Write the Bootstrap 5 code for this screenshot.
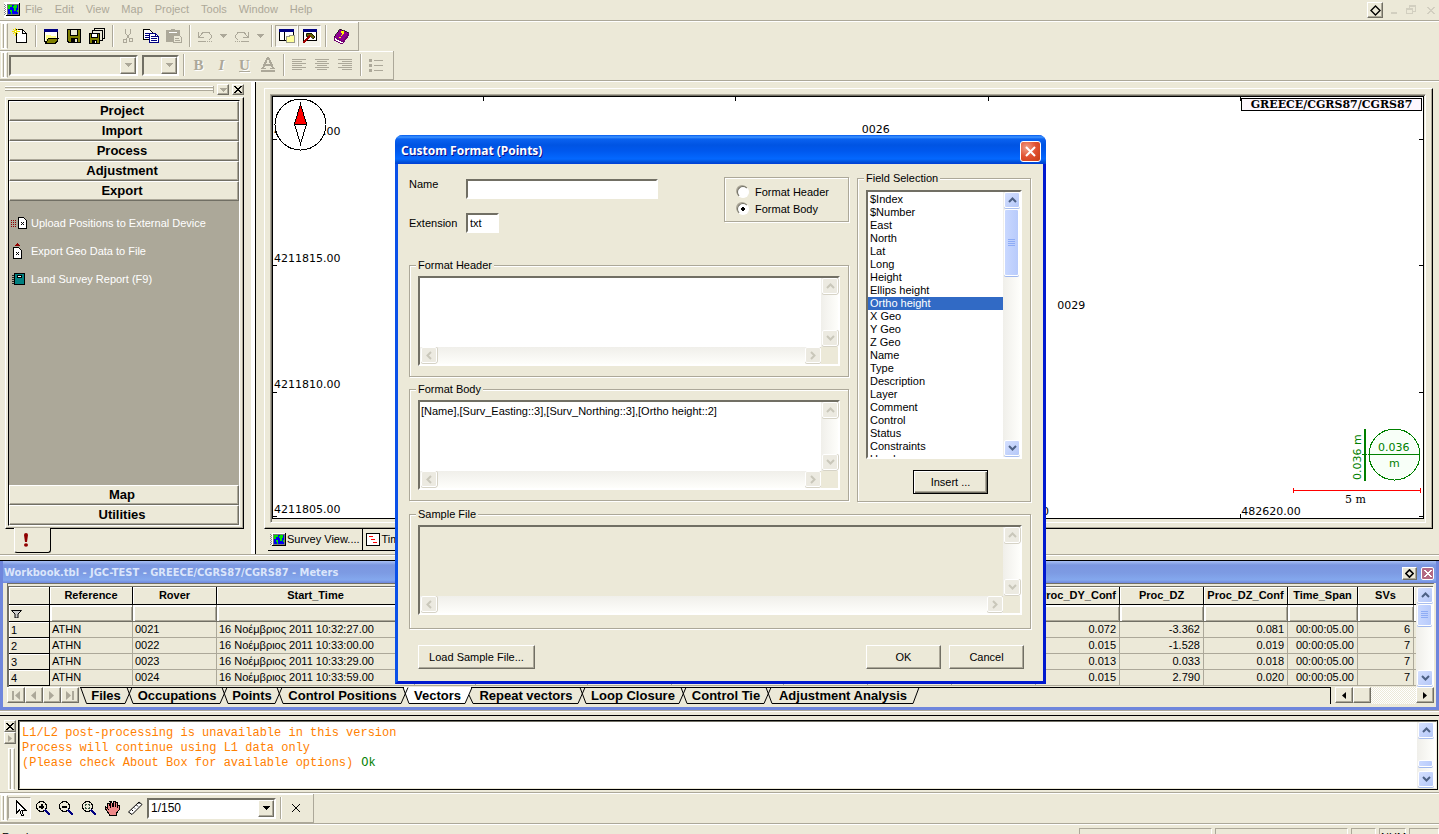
<!DOCTYPE html>
<html lang="en">
<head>
<meta charset="utf-8">
<meta name="viewport" content="width=device-width, initial-scale=1">
<title>Custom Format (Points)</title>
<link href="https://cdn.jsdelivr.net/npm/bootstrap@5.3.0/dist/css/bootstrap.min.css" rel="stylesheet">
<style>
:root{--face:#ece9d8;--shade:#aca899;--dark:#716f64;}
body{font:11px/13px "Liberation Sans",sans-serif;color:#000;background:var(--face);height:100vh;overflow:hidden}
button,input,select,textarea{font:inherit;color:inherit;border-radius:0}
button{padding:0;border:0;background:none}
svg{display:block;flex:none}
.ico{width:16px;height:16px;shape-rendering:crispEdges}
a{color:inherit;text-decoration:none}
.etch{border-bottom:1px solid var(--shade);box-shadow:0 1px #fff;margin-bottom:1px}
.raised{border:1px solid;border-color:#fff var(--dark) var(--dark) #fff;box-shadow:inset -1px -1px var(--shade);background:var(--face)}
.sunk{border:1px solid;border-color:var(--shade) #fff #fff var(--shade);box-shadow:inset 1px 1px var(--dark);padding:1px 1px 3px 1px}
/* menu */
.menubar{height:21px;padding:0 0 0 4px;color:var(--shade)}
.menubar .menus{gap:12px;padding-left:5px;padding-bottom:2px}
.sysbtn{width:16px;height:16px;color:#d2cfc0}
/* toolbars */
.tbar{height:29px;width:max-content;border-right:1px solid var(--shade);border-bottom:1px solid var(--shade);box-shadow:inset 0 1px #fff;padding:2px 6px 2px 1px}
.grip{width:7px;height:26px;border:1px solid;border-color:#fff var(--shade) #fff #fff;position:relative;background:linear-gradient(90deg,transparent 1px,var(--shade) 1px 2px,#fff 2px 4px,transparent 4px)}
.tb{width:23px;height:22px;display:flex;align-items:center;justify-content:center;color:var(--shade)}
.tb.on{border:1px solid;border-color:var(--shade) #fff #fff var(--shade);background:#f6f4ec}
.tsep{width:8px;height:22px;background:linear-gradient(90deg,transparent 4px,var(--shade) 4px 5px,#fff 5px 6px,transparent 6px)}
.tdrop{width:14px;height:22px;display:flex;align-items:center;justify-content:center;color:var(--shade)}
.glyph{font:bold 15px/18px "Liberation Serif",serif;text-shadow:1px 1px #fff}
.combo{height:21px;display:flex;border:2px solid;border-color:var(--dark) #fff #fff var(--dark);position:relative;margin-left:1px}
.combo select{appearance:none;border:0;background:transparent;width:100%;padding:0 2px;outline:0;height:17px}
.combo .arrow{width:16px;height:17px;position:absolute;right:0;top:0;display:flex;align-items:center;justify-content:center;pointer-events:none}
/* left pane */
.side{width:256px;border-right:1px solid #000;box-shadow:inset -5px 0 0 -1px #fff;padding:1px 11px 0 5px}
.side .hd{height:13px;gap:3px;margin-bottom:1px}
.side .lines{height:7px;border-right:1px solid var(--shade);background:linear-gradient(#fff 1px,var(--shade) 1px 2px,transparent 2px 3px,#fff 3px 4px,var(--shade) 4px 5px,transparent 5px)}
.mini{width:12px;height:11px;display:flex;align-items:center;justify-content:center}
.panel{border:1px solid;border-color:#fff #000 #000 #fff;box-shadow:inset -1px -1px var(--shade)}
.side .panel{padding:2px 3px 2px 2px;width:239px}
.stack{border:1px solid #000;border-right-color:#fff;border-bottom-color:#fff}
.stack>button{height:20px;padding-right:4px;font:bold 13px/18px "Liberation Sans",sans-serif}
.well{background:var(--shade);color:#fff;padding:8px 2px}
.well a{display:flex;align-items:center;gap:4px;height:28px}
.lip{height:25px;margin:-1px 0 1px 9px;width:37px;background:var(--face);border-right:1px solid #000;border-bottom:1px solid #000;border-radius:0 0 3px 3px;border-left:1px solid #fff}
/* map */
.views{padding:6px 6px 3px 8px}
.views .panel{padding:5px 6px 5px 5px}
.map{background:#fff;border:1px solid #000;font:11px/13px "DejaVu Sans",sans-serif;overflow:hidden}
.map>*{position:absolute}
.tick-v{width:1px;height:4px;background:#000}
.tick-h{height:1px;width:4px;background:#000}
.crs{right:1px;top:1px;height:13px;width:181px;border:1px solid #000;background:#fdf7fd;font:bold 11px/11px "DejaVu Serif",serif;text-align:center}
.vt{display:flex;align-items:center;height:22px;padding:0 2px 0 2px;border-right:1px solid #000;border-bottom:1px solid #000;gap:1px;white-space:nowrap}
/* workbook */
.rule2{height:7px;border-top:1px solid var(--shade);border-bottom:1px solid #000;box-shadow:inset 0 1px #fff}
.book{border:3px solid #6f86dc;border-top:0;background:var(--face)}
.cap{height:22px;background:linear-gradient(#a8c0f4,#7b97e0 4px,#7d9be3 12px,#84a8ee 19px,#6f86dc);color:#dbe6fb;font:bold 11px/22px "DejaVu Sans Condensed","DejaVu Sans",sans-serif;padding:2px 2px 0 1px}
.capx{width:13px;height:13px;border:1px solid #fff;border-radius:2px;background:#b46a84;color:#fff;display:flex;align-items:center;justify-content:center}
.grid-wrap{border:2px solid var(--dark);border-top:4px double var(--dark);border-bottom:0;border-right:1px solid #fff;height:104px;overflow:hidden}
.grid-wrap table{table-layout:fixed;width:1480px;border-collapse:separate;border-spacing:0}
.grid-wrap th{height:18px;border-right:1px solid #000;border-bottom:1px solid #000;box-shadow:inset 1px 1px #fff;text-align:center;padding:0;font-weight:bold}
.grid-wrap td{height:16px;padding:0 2px;border-right:1px solid var(--shade);border-bottom:1px solid var(--shade);line-height:15px;white-space:nowrap}
.grid-wrap td.num{text-align:right;padding-right:3px}
.grid-wrap tbody th{text-align:left;padding-left:2px;font-weight:normal;height:16px;line-height:14px}
.grid-wrap .filt td,.grid-wrap .filt th{height:17px}
.grid-wrap .filt td{box-shadow:inset 2px 2px #fff,inset -1px -1px var(--shade);border-color:var(--dark)}
.tabrow{height:17px;font:bold 13px/16px "Liberation Sans",sans-serif}
.rest{border-top:1px solid #000;border-right:1px solid #000;margin-right:4px}
.navb{width:18px;height:16px;display:flex;align-items:center;justify-content:center;color:var(--shade)}
.sheets{display:grid;grid-template-columns:11px 32px 15px 80px 15px 40px 15px 111px 15px 49px 15px 98px 15px 86px 15px 70px 15px 134px 10px}
.sheets button{border-top:1px solid #000;border-bottom:1px solid #000;height:17px;line-height:15px;font-weight:bold;white-space:nowrap;display:flex;justify-content:center}
.sheets button.cur{background:#fff;border-top-color:#fff}
.hatch{background:repeating-conic-gradient(#fff 0 25%,var(--face) 0 50%) 0 0/2px 2px}
/* XP scroll bars */
.vs{width:17px;display:flex;flex-direction:column;justify-content:space-between;background:linear-gradient(90deg,#f0efea,#fefefb)}
.hs{height:17px;display:flex;justify-content:space-between;background:linear-gradient(#f0efea,#fefefb)}
.sb{width:16px;height:16px;flex:none;border:1px solid #fff;border-radius:2px;background:linear-gradient(135deg,#d5e0ff,#b5c8f8);box-shadow:0 1px #a9bff0;display:flex;align-items:center;justify-content:center;color:#4d6185;margin:0 0 1px 1px}
.off .sb{background:#eceae1;box-shadow:0 1px #d6d3c6,1px 0 #d6d3c6;color:#c9c7ba}
.thumb{width:15px;margin-left:1px;border:1px solid #fff;border-radius:2px;background:linear-gradient(90deg,#c9d8ff,#b8cbfb);box-shadow:0 1px #a0b8ee;display:flex;align-items:center;justify-content:center;color:#8eacf5}
/* console */
.cons{border:1px solid #000;background:#fff;height:70px}
.cons .inner{border:1px solid var(--dark);border-right-color:var(--face);border-bottom-color:var(--face)}
.cons .txt{font:12px/15px "Liberation Mono",monospace;color:#ff8000;padding:4px 2px;overflow:hidden;white-space:nowrap}
.ok{color:#008000}
.status{height:9px;overflow:hidden;gap:3px;padding-top:3px}
.status>:first-child{padding:3px 0 0 2px}
.cell{height:18px;border:1px solid;border-color:var(--shade) #fff #fff var(--shade);padding:2px 1px}
/* dialog */
.desk{position:absolute;inset:0;padding:135px 0 0 2px;pointer-events:none}
.dlg{width:651px;pointer-events:auto;border:3px solid;border-top:0;border-color:#0a50e8 #0019cf #0019cf #0a50e8;border-radius:8px 8px 0 0;background:var(--face)}
.dcap{height:29px;margin:0 -3px;padding:3px 5px 0 6px;border-radius:7px 7px 0 0;background:linear-gradient(#0058ee,#3f95ff 2px,#0a62f0 4px,#0054e3 10px,#0058ee 16px,#0468ff 24px,#0050d8 27px,#003dd7);color:#fff;font:bold 12px/30px "Noto Sans",sans-serif;text-shadow:1px 1px #0f1089}
.dcap button{width:21px;height:21px;border:1px solid #fff;border-radius:3px;background:radial-gradient(circle at 30% 30%,#f0a088,#e05030 50%,#c63c14);display:flex;align-items:center;justify-content:center}
.dbody{padding:13px 12px 12px 11px;height:517px;line-height:14px}
fieldset{border:1px solid var(--shade);box-shadow:1px 1px #fff,inset 1px 1px #fff;padding:0 8px;min-width:0}
legend{float:none;width:auto;font-size:11px;line-height:14px;margin:0 0 0 -2px;padding:0 2px;background:var(--face)}
.fld{border:2px solid;border-color:var(--dark) #fff #fff var(--dark);background:#fff;height:20px;padding:0 2px;outline:0}
.area{border:2px solid;border-color:var(--dark) #fff #fff var(--dark);background:#fff;height:90px;display:grid;grid-template:1fr 17px/1fr 17px}
.area textarea{border:0;resize:none;background:transparent;padding:2px 1px;outline:0;overflow:hidden;width:100%;height:100%;display:block}
.area .corner,.area.ro{background:var(--face)}
.list{border:2px solid;border-color:var(--dark) #fff #fff var(--dark);background:#fff;height:269px;margin-top:5px}
.list select{border:0;outline:0;width:100%;height:265px;overflow:hidden;padding:1px 0 0;background:#fff}
.list select::-webkit-scrollbar{display:none}
.list option{padding:0 2px;line-height:13px;height:13px;min-height:13px}
.list option:checked{background:#316ac5 linear-gradient(#316ac5,#316ac5);color:#fff}
.pb{height:24px;width:75px;line-height:20px}
.pb.def{outline:1px solid #000;outline-offset:-1px;border-color:#000;box-shadow:inset 1px 1px #fff,inset -1px -1px var(--dark),inset -2px -2px var(--shade)}
.rad{appearance:none;width:12px;height:12px;border-radius:50%;margin:0;background:#fff;border:1px solid;border-color:var(--dark) #fff #fff var(--dark);box-shadow:-1px -1px var(--shade)}
.rad:checked{background:radial-gradient(circle,#000 2px,#fff 2px)}
</style>
</head>
<body class="d-flex flex-column">
<svg width="0" height="0" class="position-absolute" aria-hidden="true">
  <symbol id="up" viewBox="0 0 9 6"><path d="M1 5l3.500-3.500L8 5" fill="none" stroke="currentColor" stroke-width="2"/></symbol>
  <symbol id="dn" viewBox="0 0 9 6"><path d="M1 1l3.500 3.500L8 1" fill="none" stroke="currentColor" stroke-width="2"/></symbol>
  <symbol id="lf" viewBox="0 0 6 9"><path d="M5 1L1.500 4.500 5 8" fill="none" stroke="currentColor" stroke-width="2"/></symbol>
  <symbol id="rt" viewBox="0 0 6 9"><path d="M1 1l3.500 3.500L1 8" fill="none" stroke="currentColor" stroke-width="2"/></symbol>
  <symbol id="tri" viewBox="0 0 7 4"><path d="M0 0h7v1H6v1H5v1H4v1H3V3H2V2H1V1H0z" fill="currentColor"/></symbol>
  <symbol id="ex" viewBox="0 0 8 7"><path d="M0 0h2v1h1v1h2V1h1V0h2v1H7v1H6v1H5v1h1v1h1v1h1v1H6V6H5V5H3v1H2v1H0V6h1V5h1V4h1V3H2V2H1V1H0z" fill="currentColor"/></symbol>
  <symbol id="grips" viewBox="0 0 7 8"><path d="M0 0.500h7M0 2.500h7M0 4.500h7M0 6.500h7" stroke="currentColor"/></symbol>
  <symbol id="globe" viewBox="0 0 16 16"><path d="M2 1h14v13H2z" fill="#000"/><path d="M2 1h13v12H2z" fill="#fff"/><path d="M3 2h12v11H3z" fill="#777"/><path d="M4 3h10v9H4z" fill="#0000f0"/><path d="M4 3h4v2H6v2H4zM10 3h3v3h-1v3h-2V6H9V4h1zM6 8h2v4H7v-2H6zM13 8h1v2h-1z" fill="#00e000"/><path d="M0 2h1v1H0zM1 3h1v1H1zM0 4h1v1H0zM1 5h1v1H1zM0 6h1v1H0zM1 7h1v1H1zM0 8h1v1H0zM1 9h1v1H1zM0 10h1v1H0zM1 11h1v1H1zM0 12h1v1H0z" fill="#888"/></symbol>
  <symbol id="floppy" viewBox="0 0 14 14"><path d="M0 0h14v14H1v-1H0z" fill="#000"/><path d="M1 1h2v6h8V1h2v12h-2V9H4v4H2v-1H1z" fill="#808000"/><path d="M4 1h6v5H4zM8 10h2v3H8z" fill="#ece9d8"/></symbol>
  <symbol id="sep" viewBox="0 0 15 17"><path d="M0 16.500h3l7-16M5 .5h10M0 .5h6M5 .5l6 16h4" fill="none" stroke="#000"/></symbol>
</svg>

<header>
  <nav class="menubar etch d-flex align-items-center" aria-label="Main menu">
    <svg class="ico bg-white"><use href="#globe"/></svg>
    <div class="menus d-flex me-auto"><a href="#">File</a><a href="#">Edit</a><a href="#">View</a><a href="#">Map</a><a href="#">Project</a><a href="#">Tools</a><a href="#">Window</a><a href="#">Help</a></div>
    <button class="sysbtn raised d-flex align-items-center justify-content-center me-1" aria-label="Pin"><svg width="11" height="11" viewBox="0 0 11 11"><path d="M5.500 1L10 5.500 5.500 10 1 5.500z" fill="none" stroke="#000" stroke-width="1.400"/></svg></button>
    <button class="sysbtn" aria-label="Minimize"><svg class="ico" viewBox="0 0 16 16"><path d="M4 10h6v2H4z" fill="currentColor"/></svg></button>
    <button class="sysbtn" aria-label="Restore"><svg class="ico" viewBox="0 0 16 16"><path d="M6.500 6V3.500h6v6H10M3.500 6.500h6v5h-6zM6 4h7M3 7h7" fill="none" stroke="currentColor"/></svg></button>
    <button class="sysbtn d-flex align-items-center justify-content-center ms-1" aria-label="Close"><svg width="8" height="7"><use href="#ex"/></svg></button>
  </nav>
  <div class="tbar d-flex align-items-center" role="toolbar" aria-label="Standard">
    <span class="grip"></span>
    <button class="tb" aria-label="New"><svg class="ico" viewBox="1 1 16 16"><path d="M5.500 2.500h6l4 4v9h-10z" fill="#fff" stroke="#000"/><path d="M11.500 2.500v4h4" fill="none" stroke="#000"/><path d="M4.500 1v8M1 4.500h8M2 2l5 5M7 2L2 7" stroke="#f0e000"/><path d="M4 4h1v1H4z" fill="#fff"/></svg></button>
    <span class="tsep"></span>
    <button class="tb" aria-label="Open"><svg class="ico" viewBox="0 0 16 16"><path d="M1 1h14v13H1z" fill="#000"/><path d="M1 1h14v3H1z" fill="#000080"/><path d="M2 4h12v9H2z" fill="#fff"/><path d="M3 7h4l1 1h5v3H5l-2 3z" fill="#ff8"/><path d="M5.500 10.500h10l-3 5h-10z" fill="#808000" stroke="#000"/></svg></button>
    <button class="tb" aria-label="Save"><svg width="14" height="14" shape-rendering="crispEdges"><use href="#floppy"/></svg></button>
    <button class="tb" aria-label="Save all"><svg class="ico" viewBox="0 0 16 16"><path d="M5.500.5h10v10h-10z" fill="#ece9d8" stroke="#000"/><path d="M3.500 2.500h10v10h-10z" fill="#ece9d8" stroke="#000"/><path d="M0 5h11v11H0z" fill="#000"/><path d="M1 6h1v4h7V6h1v9H8v-3H3v3H1z" fill="#808000"/><path d="M3 6h5v3H3zM6 13h1v2H6z" fill="#fff"/></svg></button>
    <span class="tsep"></span>
    <button class="tb" aria-label="Cut"><svg class="ico" viewBox="0 0 16 16"><path d="M5.500 1v4l4 6M10.500 1v4l-4 6" fill="none" stroke="currentColor"/><circle cx="5" cy="13" r="2" fill="none" stroke="currentColor"/><circle cx="11" cy="12" r="2" fill="none" stroke="currentColor"/></svg></button>
    <button class="tb" aria-label="Copy"><svg class="ico" viewBox="0 0 16 16"><path d="M.5 1.500h6l3 3v7h-9z" fill="#fff" stroke="#000"/><path d="M2 5.500h5M2 7.500h5M2 9.500h5" stroke="#000080"/><path d="M6.500 5.500h6l3 3v6h-9z" fill="#fff" stroke="#000080"/><path d="M8 8.500h4M8 10.500h6M8 12.500h6M12.500 5v3h3" fill="none" stroke="#000080"/></svg></button>
    <button class="tb" aria-label="Paste"><svg class="ico" viewBox="0 0 16 16"><path d="M0 2h5V1h4v1h5v12H0z" fill="currentColor"/><path d="M3 4.500h8" stroke="#fff"/><path d="M7.500 7.500h6l2 2v5h-8z" fill="#ece9d8" stroke="currentColor"/><path d="M9 10.500h4M9 12.500h5" stroke="currentColor"/></svg></button>
    <span class="tsep"></span>
    <button class="tb" aria-label="Undo"><svg class="ico" viewBox="0 0 16 16"><path d="M1.500 4v5.500H7M2 9l4-4.500h6l2.500 3v2l-3 3M1 13.500h8M10 13.500h1M12 13.500h1M14 13.500h1" fill="none" stroke="currentColor"/></svg></button>
    <button class="tdrop" aria-label="Undo list"><svg width="7" height="4"><use href="#tri"/></svg></button>
    <button class="tb" aria-label="Redo"><svg class="ico" viewBox="0 0 16 16"><path d="M14.500 4v5.500H9M14 9l-4-4.500H4L1.500 7.500v2l3 3M15 13.500H7M6 13.500H5M4 13.500H3M2 13.500H1" fill="none" stroke="currentColor"/></svg></button>
    <button class="tdrop" aria-label="Redo list"><svg width="7" height="4"><use href="#tri"/></svg></button>
    <span class="tsep"></span>
    <button class="tb on" aria-label="Workspace"><svg class="ico" viewBox="0 0 16 16"><path d="M0 1h15v12H0z" fill="#000"/><path d="M0 1h15v3H0z" fill="#000080"/><path d="M1 4h4v8H1zM6 4h8v8H6z" fill="#fff"/><path d="M7.500 8.500h3v-1h5v7h-8z" fill="#ff9" stroke="#998"/></svg></button>
    <button class="tb on" aria-label="Output"><svg class="ico" viewBox="0 0 16 16"><path d="M1 1h14v12H1z" fill="#000"/><path d="M1 1h14v3H1z" fill="#000080"/><path d="M2 4h12v8H2z" fill="#fff"/><path d="M5 5h4l4 4-2 2-3-3-3 1-1-1z" fill="#606000" stroke="#000" stroke-width=".7"/><path d="M8 8l-7 7" stroke="#a00000" stroke-width="2"/></svg></button>
    <span class="tsep"></span>
    <button class="tb" aria-label="Help topics"><svg class="ico" viewBox="0 0 16 16"><path d="M1 9l6-8 9 4-6 9z" fill="#900090" stroke="#000" stroke-width=".7"/><path d="M1 9v3l8 4 7-9V5l-6 9z" fill="#fff" stroke="#700070"/><path d="M8 4h2v2L8 8M7 9v1" stroke="#ff0" fill="none" stroke-width="1.300"/></svg></button>
  </div>
  <div class="tbar d-flex align-items-center" role="toolbar" aria-label="Formatting">
    <span class="grip"></span>
    <div class="combo" style="width:129px"><select aria-label="Font" disabled><option></option></select><span class="arrow raised"><svg width="7" height="4" color="#aca899"><use href="#tri"/></svg></span></div>
    <div class="combo ms-1" style="width:37px"><select aria-label="Font size" disabled><option></option></select><span class="arrow raised"><svg width="7" height="4" color="#aca899"><use href="#tri"/></svg></span></div>
    <span class="tsep"></span>
    <button class="tb glyph" aria-label="Bold">B</button><button class="tb glyph fst-italic" aria-label="Italic">I</button><button class="tb glyph text-decoration-underline" aria-label="Underline">U</button>
    <button class="tb" aria-label="Font color"><svg class="ico" viewBox="0 0 16 16" shape-rendering="auto"><path d="M3 11L7.500 1h1L13 11M5 8h6" fill="none" stroke="currentColor" stroke-width="2"/><path d="M1 11.500h5M10 11.500h5" stroke="currentColor"/><path d="M1 13h14v2H1z" fill="currentColor"/></svg></button>
    <span class="tsep"></span>
    <button class="tb" aria-label="Align left"><svg class="ico" viewBox="0 0 16 16"><path d="M1 2.500h14M1 4.500h10M1 6.500h14M1 8.500h10M1 10.500h14M1 12.500h10" stroke="currentColor"/></svg></button>
    <button class="tb" aria-label="Align center"><svg class="ico" viewBox="0 0 16 16"><path d="M1 2.500h14M3 4.500h10M1 6.500h14M3 8.500h10M1 10.500h14M3 12.500h10" stroke="currentColor"/></svg></button>
    <button class="tb" aria-label="Align right"><svg class="ico" viewBox="0 0 16 16"><path d="M1 2.500h14M5 4.500h10M1 6.500h14M5 8.500h10M1 10.500h14M5 12.500h10" stroke="currentColor"/></svg></button>
    <span class="tsep"></span>
    <button class="tb" aria-label="Bullets"><svg class="ico" viewBox="0 0 16 16"><path d="M1 2h3v3H1zM1 7h3v3H1zM1 12h3v3H1zM6 3h9v1H6zM6 8h9v1H6zM6 13h9v1H6z" fill="currentColor"/></svg></button>
  </div>
  <div class="etch"></div>
</header>

<main class="d-flex flex-fill overflow-hidden">
  <aside class="side d-flex flex-column flex-shrink-0">
    <div class="hd d-flex align-items-center"><span class="lines flex-fill"></span>
      <button class="mini raised" aria-label="Pane menu"><svg width="7" height="4" color="#aca899"><use href="#tri"/></svg></button><button class="mini raised" aria-label="Close pane"><svg width="8" height="7"><use href="#ex"/></svg></button></div>
    <div class="panel d-flex flex-column flex-fill">
      <div class="stack d-flex flex-column flex-fill">
        <button class="raised">Project</button><button class="raised">Import</button><button class="raised">Process</button><button class="raised">Adjustment</button><button class="raised">Export</button>
        <div class="well flex-fill">
          <a href="#"><svg class="ico" viewBox="0 0 16 16"><path d="M0 5h1v1H0zM2 5h1v1H2zM4 5h1v1H4zM0 7h1v1H0zM2 7h1v1H2zM4 7h1v1H4zM0 9h1v1H0zM2 9h1v1H2zM4 9h1v1H4zM0 11h1v1H0zM2 11h1v1H2zM4 11h1v1H4z" fill="#900000"/><path d="M7.500 2.500h5l3 3v8h-8z" fill="#fff" stroke="#000"/><path d="M10 7l3 3M13 7l-3 3" stroke="#000"/></svg>Upload Positions to External Device</a>
          <a href="#"><svg class="ico" viewBox="0 0 16 16"><path d="M3 3l3-3 3 3z" fill="#900000"/><path d="M2.500 4.500h5l3 3v8h-8z" fill="#fff" stroke="#000"/><path d="M5 9l3 3M8 9l-3 3" stroke="#000"/></svg>Export Geo Data to File</a>
          <a href="#"><svg class="ico" viewBox="0 0 16 16"><path d="M3 2h11v12H3z" fill="#000"/><path d="M4 3h9v10H4z" fill="#008080"/><path d="M6 4h5v3H6z" fill="#000"/><path d="M7 5h3v1H7z" fill="#fff"/><path d="M1 4.500h2M1 6.500h2M1 8.500h2M1 10.500h2M1 12.500h2" stroke="#222"/></svg>Land Survey Report (F9)</a>
        </div>
        <button class="raised">Map</button><button class="raised">Utilities</button>
      </div>
    </div>
    <button class="lip flex-shrink-0 d-flex align-items-center" aria-label="Alerts"><svg width="6" height="14" class="ms-2"><path d="M1 2a2 2 0 0 1 4 0L4 9H2zM1 12a2 1.800 0 1 0 4 0 2 1.800 0 0 0-4 0" fill="#900000"/></svg></button>
  </aside>

  <section class="views d-flex flex-column flex-fill overflow-hidden">
    <div class="panel flex-fill d-flex">
      <div class="sunk flex-fill d-flex"><div class="map position-relative flex-fill">
        <span style="left:1px;top:6.600%">4211820.00</span><span style="left:1px;top:36.800%">4211815.00</span><span style="left:1px;top:66.800%">4211810.00</span><span style="left:1px;bottom:2px">4211805.00</span>
        <i class="tick-h" style="left:0;top:10%"></i><i class="tick-h" style="left:0;top:40%"></i><i class="tick-h" style="left:0;top:70%"></i><i class="tick-h" style="left:0;bottom:1px"></i>
        <i class="tick-h" style="right:0;top:10%"></i><i class="tick-h" style="right:0;top:40%"></i><i class="tick-h" style="right:0;top:70%"></i><i class="tick-h" style="right:0;bottom:1px"></i>
        <i class="tick-v" style="left:18.300%;top:0"></i><i class="tick-v" style="left:40.200%;top:0"></i><i class="tick-v" style="left:62.200%;top:0"></i><i class="tick-v" style="left:84.100%;top:0"></i><i class="tick-v" style="left:84.100%;bottom:0"></i>
        <span style="left:62.300%;bottom:0">482610.00</span><span style="left:84.200%;bottom:0">482620.00</span>
        <span style="left:51.200%;top:6.200%">0026</span><span style="left:68.200%;top:48%">0029</span>
        <svg width="53" height="53" style="left:1px;top:1px" shape-rendering="crispEdges"><circle cx="26.500" cy="26.500" r="25.500" fill="#fff" stroke="#000"/><path d="M26.500 6l6 20h-12z" fill="red" stroke="#000"/><path d="M20.500 26h12l-6 20z" fill="#fff" stroke="#000"/></svg>
        <span class="crs">GREECE/CGRS87/CGRS87</span>
        <svg width="134" height="80" style="right:0;bottom:13px" font-family="DejaVu Sans,sans-serif" font-size="11" fill="#008000"><g shape-rendering="crispEdges"><circle cx="105.500" cy="29.500" r="25.500" fill="#f8fff8" stroke="#008000"/><path d="M80 29.500h51M73 29.500h5" stroke="#008000"/><path d="M76 4v52" stroke="#008000" stroke-width="2"/><path d="M4.500 65.500h127M4.500 63v5M131.500 63v5" stroke="red"/></g><text x="89" y="26">0.036</text><text x="100" y="42">m</text><text transform="translate(72 55) rotate(-90)">0.036 m</text><text x="56" y="78" fill="#000" font-family="DejaVu Serif,serif" font-size="11">5 m</text></svg>
      </div></div>
    </div>
    <div class="d-flex flex-shrink-0 ms-1">
      <button class="vt"><svg class="ico"><use href="#globe"/></svg>Survey View....</button>
      <button class="vt"><svg class="ico" viewBox="0 0 16 16"><path d="M1.500 1.500h13v12h-13z" fill="#fff" stroke="#000"/><path d="M4 4.500h4M6 7.500h4M8 10.500h4" stroke="red"/></svg>Time View....</button>
    </div>
  </section>
</main>

<div class="rule2 flex-shrink-0"></div>
<section class="book flex-shrink-0">
  <div class="cap d-flex align-items-center"><span class="me-auto">Workbook.tbl - JGC-TEST - GREECE/CGRS87/CGRS87 - Meters</span>
    <button class="mini raised me-1" style="width:15px;height:13px" aria-label="Pin workbook"><svg width="9" height="9" viewBox="0 0 11 11"><path d="M5.500 1L10 5.500 5.500 10 1 5.500z" fill="none" stroke="#000" stroke-width="2"/></svg></button>
    <button class="capx" aria-label="Close workbook"><svg width="8" height="7"><use href="#ex"/></svg></button></div>
  <div class="ps-1" style="padding-right:2px">
    <div class="grid-wrap d-flex">
      <div class="flex-fill overflow-hidden" style="width:0">
      <table>
        <colgroup><col style="width:41px"><col style="width:83px"><col style="width:84px"><col style="width:198px"><col style="width:61px"><col style="width:112px"><col style="width:84px"><col style="width:112px"><col style="width:84px"><col style="width:84px"><col style="width:84px"><col style="width:84px"><col style="width:84px"><col style="width:84px"><col style="width:70px"><col style="width:56px"><col></colgroup>
        <thead><tr><th></th><th>Reference</th><th>Rover</th><th>Start_Time</th><th></th><th></th><th></th><th></th><th></th><th></th><th></th><th>Proc_DY_Conf</th><th>Proc_DZ</th><th>Proc_DZ_Conf</th><th>Time_Span</th><th>SVs</th><th></th></tr></thead>
        <tbody>
        <tr class="filt"><th><svg width="11" height="9" viewBox="0 0 11 9"><path d="M.5 1.500h10L7 5v4H4V5z" fill="#ccc" stroke="#000"/></svg></th><td></td><td></td><td></td><td></td><td></td><td></td><td></td><td></td><td></td><td></td><td></td><td></td><td></td><td></td><td></td><td></td></tr>
        <tr><th>1</th><td>ATHN</td><td>0021</td><td>16 Νοέμβριος 2011 10:32:27.00</td><td></td><td></td><td></td><td></td><td></td><td></td><td></td><td class="num">0.072</td><td class="num">-3.362</td><td class="num">0.081</td><td class="num">00:00:05.00</td><td class="num">6</td><td></td></tr>
        <tr><th>2</th><td>ATHN</td><td>0022</td><td>16 Νοέμβριος 2011 10:33:00.00</td><td></td><td></td><td></td><td></td><td></td><td></td><td></td><td class="num">0.015</td><td class="num">-1.528</td><td class="num">0.019</td><td class="num">00:00:05.00</td><td class="num">7</td><td></td></tr>
        <tr><th>3</th><td>ATHN</td><td>0023</td><td>16 Νοέμβριος 2011 10:33:29.00</td><td></td><td></td><td></td><td></td><td></td><td></td><td></td><td class="num">0.013</td><td class="num">0.033</td><td class="num">0.018</td><td class="num">00:00:05.00</td><td class="num">7</td><td></td></tr>
        <tr><th>4</th><td>ATHN</td><td>0024</td><td>16 Νοέμβριος 2011 10:33:59.00</td><td></td><td></td><td></td><td></td><td></td><td></td><td></td><td class="num">0.015</td><td class="num">2.790</td><td class="num">0.020</td><td class="num">00:00:05.00</td><td class="num">7</td><td></td></tr>
        </tbody>
      </table></div>
      <div class="vs flex-shrink-0"><div><button class="sb" aria-label="Scroll up"><svg width="9" height="6"><use href="#up"/></svg></button><div class="thumb" style="height:22px"><svg width="7" height="8"><use href="#grips"/></svg></div></div><button class="sb" aria-label="Scroll down"><svg width="9" height="6"><use href="#dn"/></svg></button></div>
    </div>
    <div class="tabrow d-flex">
      <button class="navb raised" aria-label="First sheet"><svg width="9" height="9"><path d="M0 0h2v9H0zM8 0v9L3 4.500z" fill="currentColor"/></svg></button>
      <button class="navb raised" aria-label="Previous sheet"><svg width="6" height="9"><path d="M5 0v9L0 4.500z" fill="currentColor"/></svg></button>
      <button class="navb raised" aria-label="Next sheet"><svg width="6" height="9"><path d="M0 0v9l5-4.500z" fill="currentColor"/></svg></button>
      <button class="navb raised" aria-label="Last sheet"><svg width="9" height="9"><path d="M0 0v9l5-4.500zM6 0h2v9H6z" fill="currentColor"/></svg></button>
      <div class="sheets">
        <svg width="11" height="17"><path d="M1.500 0l6 16.500H11M1 .5h10" fill="none" stroke="#000"/></svg>
        <button>Files</button><svg width="15" height="17"><use href="#sep"/></svg>
        <button>Occupations</button><svg width="15" height="17"><use href="#sep"/></svg>
        <button>Points</button><svg width="15" height="17"><use href="#sep"/></svg>
        <button>Control Positions</button><svg width="15" height="17"><path d="M6 0l5 17h4V0z" fill="#fff"/><path d="M0 16.500h3l7-16M0 .5h6M5 .5l6 16h4" fill="none" stroke="#000"/></svg>
        <button class="cur">Vectors</button><svg width="15" height="17"><path d="M0 0v17h3l7-17z" fill="#fff"/><path d="M0 16.500h3l7-16M9 .5h6M7 8l4 8.500h4" fill="none" stroke="#000"/></svg>
        <button>Repeat vectors</button><svg width="15" height="17"><use href="#sep"/></svg>
        <button>Loop Closure</button><svg width="15" height="17"><use href="#sep"/></svg>
        <button>Control Tie</button><svg width="15" height="17"><use href="#sep"/></svg>
        <button>Adjustment Analysis</button><svg width="10" height="17"><path d="M0 16.500h3l6-16h1M0 .5h10" fill="none" stroke="#000"/></svg>
      </div>
      <div class="flex-fill rest"></div>
      <button class="navb raised text-black" aria-label="Scroll left"><svg width="5" height="7"><path d="M4 0v7L0 3.500z"/></svg></button><button class="navb raised" aria-label="Scroll thumb"></button>
      <div class="hatch" style="width:45px"></div>
      <button class="navb raised text-black" aria-label="Scroll right"><svg width="5" height="7"><path d="M0 0v7l4-3.500z"/></svg></button>
    </div>
    <div style="height:3px"></div>
  </div>
</section>
<div class="rule2 flex-shrink-0" style="height:6px"></div>

<section class="d-flex flex-shrink-0 etch ps-1 pt-1" style="padding-right:1px;padding-bottom:2px">
  <div style="width:14px" class="d-flex flex-column">
    <button class="mini raised" style="height:12px" aria-label="Close output"><svg width="8" height="7"><use href="#ex"/></svg></button>
    <button class="mini raised mb-1" style="height:12px" aria-label="Expand output"><svg width="4" height="7"><path d="M0 0v7l4-3.500z" fill="#aca899"/></svg></button>
    <span class="grip flex-fill ms-1"></span>
  </div>
  <div class="cons flex-fill">
    <div class="inner d-flex h-100"><div class="txt flex-fill"><div>L1/L2 post-processing is unavailable in this version</div><div>Process will continue using L1 data only</div><div class="d-flex gap-2"><span>(Please check About Box for available options)</span><span class="ok">Ok</span></div></div>
      <div class="vs" style="margin-right:2px"><button class="sb" aria-label="Scroll output up"><svg width="9" height="6"><use href="#up"/></svg></button><div><div class="thumb" style="height:7px"></div><button class="sb mt-1" aria-label="Scroll output down"><svg width="9" height="6"><use href="#dn"/></svg></button></div></div></div>
  </div>
</section>

<footer class="flex-shrink-0">
  <div class="etch"><div class="tbar d-flex align-items-center" role="toolbar" aria-label="Map tools">
    <span class="grip"></span>
    <button class="tb on" aria-label="Select"><svg class="ico" viewBox="0 0 16 16"><path d="M4.500 1v12l3-3 2 5h2l-2-5h4z" fill="#fff" stroke="#000"/></svg></button>
    <button class="tb" aria-label="Zoom in"><svg class="ico" viewBox="0 0 16 16"><circle cx="6.500" cy="6.500" r="5" fill="none" stroke="#000"/><path d="M4 6.500h5M6.500 4v5" stroke="#000" stroke-width="2"/><path d="M10 10l5 5" stroke="#000080" stroke-width="2.500"/></svg></button>
    <button class="tb" aria-label="Zoom out"><svg class="ico" viewBox="0 0 16 16"><circle cx="6.500" cy="6.500" r="5" fill="none" stroke="#000"/><path d="M4 6.500h5" stroke="#000" stroke-width="2"/><path d="M10 10l5 5" stroke="#000080" stroke-width="2.500"/></svg></button>
    <button class="tb" aria-label="Zoom to fit"><svg class="ico" viewBox="0 0 16 16"><circle cx="6.500" cy="6.500" r="5" fill="none" stroke="#000"/><path d="M4.500 6V4.500H6M7 4.500h1.500V6M8.500 7v1.500H7M6 8.500H4.500V7" fill="none" stroke="#354"/><path d="M10 10l5 5" stroke="#000080" stroke-width="2.500"/></svg></button>
    <button class="tb" aria-label="Pan"><svg class="ico" viewBox="0 0 16 16"><path d="M4 9L1.500 6.500 1 8l4 6v1.500h7V14l3-4V5h-1.500l-.5 3V2.500h-1.500V7L11 1H9.500L9 7 7.500 1.500H6L7 8 5 3H3.500z" fill="#e88" stroke="#000"/></svg></button>
    <button class="tb" aria-label="Measure"><svg class="ico" viewBox="0 0 16 16" style="shape-rendering:auto"><path d="M1.500 12L12 2l3 2.500L5 14.500z" fill="#fff" stroke="#000"/><path d="M4.500 9.500l1.500 1.500M7 7.500l1 1M9.500 5l1.500 1.500M11.500 3l1 1" stroke="#000"/></svg></button>
    <div class="combo bg-white text-black" style="width:129px;font-size:12px"><select aria-label="Scale"><option>1/150</option></select><span class="arrow raised"><svg width="7" height="4"><use href="#tri"/></svg></span></div>
    <span class="tsep"></span>
    <button class="tb" aria-label="Close toolbar"><svg width="8" height="8"><path d="M0 0l8 8M8 0L0 8" stroke="#000"/></svg></button>
  </div></div>
  <div class="status d-flex">
    <span class="me-auto">Ready</span><span class="cell" style="width:133px"></span><span class="cell" style="width:133px"></span><span class="cell" style="width:25px"></span><span class="cell" style="width:27px">NUM</span><span class="cell" style="width:30px"></span>
  </div>
</footer>

<div class="desk d-flex justify-content-center align-items-start">
  <div class="dlg" role="dialog" aria-labelledby="dt">
    <div class="dcap d-flex align-items-center"><span id="dt" class="me-auto">Custom Format (Points)</span><button aria-label="Close"><svg width="11" height="11"><path d="M1 1l9 9M10 1l-9 9" stroke="#fff" stroke-width="2"/></svg></button></div>
    <form class="dbody d-flex flex-column">
      <div class="d-flex gap-2">
        <div class="flex-fill">
          <div class="d-flex" style="height:81px">
            <div class="me-auto">
              <div class="d-flex mb-3"><label for="nm" style="width:57px">Name</label><input id="nm" class="fld" style="width:192px;margin-top:2px"></div>
              <div class="d-flex align-items-center" style="margin-top:-2px"><label for="ext" style="width:57px">Extension</label><input id="ext" class="fld" style="width:33px" value="txt"></div>
            </div>
            <fieldset style="width:125px;height:45px;padding:5px 0 0 12px" aria-label="Target">
              <label class="d-flex align-items-center" style="gap:6px;height:17px"><input type="radio" name="t" class="rad">Format Header</label>
              <label class="d-flex align-items-center" style="gap:6px;height:17px"><input type="radio" name="t" class="rad" checked>Format Body</label>
            </fieldset>
          </div>
          <fieldset style="height:119px;margin-bottom:5px"><legend>Format Header</legend>
            <div class="area off mt-1"><textarea aria-label="Format Header"></textarea>
              <div class="vs"><span class="sb"><svg width="9" height="6"><use href="#up"/></svg></span><span class="sb"><svg width="9" height="6"><use href="#dn"/></svg></span></div>
              <div class="hs"><span class="sb"><svg width="6" height="9"><use href="#lf"/></svg></span><span class="sb"><svg width="6" height="9"><use href="#rt"/></svg></span></div><div class="corner"></div></div></fieldset>
          <fieldset style="height:119px"><legend>Format Body</legend>
            <div class="area off mt-1"><textarea aria-label="Format Body">[Name],[Surv_Easting::3],[Surv_Northing::3],[Ortho height::2]</textarea>
              <div class="vs"><span class="sb"><svg width="9" height="6"><use href="#up"/></svg></span><span class="sb"><svg width="9" height="6"><use href="#dn"/></svg></span></div>
              <div class="hs"><span class="sb"><svg width="6" height="9"><use href="#lf"/></svg></span><span class="sb"><svg width="6" height="9"><use href="#rt"/></svg></span></div><div class="corner"></div></div></fieldset>
        </div>
        <fieldset style="width:174px;height:331px;margin-top:-6px"><legend>Field Selection</legend>
          <div class="list d-flex"><select size="20" aria-label="Field Selection"><option>$Index</option><option>$Number</option><option>East</option><option>North</option><option>Lat</option><option>Long</option><option>Height</option><option>Ellips height</option><option selected>Ortho height</option><option>X Geo</option><option>Y Geo</option><option>Z Geo</option><option>Name</option><option>Type</option><option>Description</option><option>Layer</option><option>Comment</option><option>Control</option><option>Status</option><option>Constraints</option><option>Used</option></select>
            <div class="vs flex-shrink-0"><div><span class="sb"><svg width="9" height="6"><use href="#up"/></svg></span><div class="thumb" style="height:67px"><svg width="7" height="8"><use href="#grips"/></svg></div></div><span class="sb"><svg width="9" height="6"><use href="#dn"/></svg></span></div></div>
          <div class="text-center" style="padding:11px 0 0 13px"><button type="button" class="pb raised def">Insert ...</button></div>
        </fieldset>
      </div>
      <fieldset style="height:122px;margin-top:5px"><legend>Sample File</legend>
        <div class="area off ro mt-1"><textarea aria-label="Sample File" readonly></textarea>
          <div class="vs"><span class="sb"><svg width="9" height="6"><use href="#up"/></svg></span><span class="sb"><svg width="9" height="6"><use href="#dn"/></svg></span></div>
          <div class="hs"><span class="sb"><svg width="6" height="9"><use href="#lf"/></svg></span><span class="sb"><svg width="6" height="9"><use href="#rt"/></svg></span></div><div class="corner"></div></div></fieldset>
      <div class="d-flex mt-3 gap-2" style="padding:0 7px 0 9px"><button type="button" class="pb raised me-auto" style="width:117px">Load Sample File...</button><button type="button" class="pb raised">OK</button><button type="button" class="pb raised">Cancel</button></div>
    </form>
  </div>
</div>
<script src="https://cdn.jsdelivr.net/npm/bootstrap@5.3.0/dist/js/bootstrap.bundle.min.js"></script>
</body>
</html>
